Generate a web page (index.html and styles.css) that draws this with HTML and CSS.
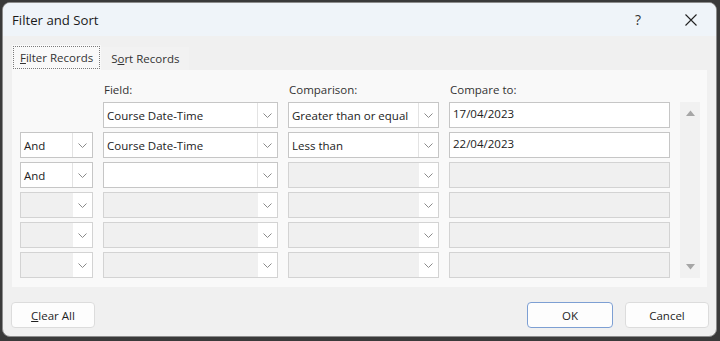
FILE: index.html
```html
<!DOCTYPE html>
<html>
<head>
<meta charset="utf-8">
<link rel="stylesheet" href="styles.css">
</head>
<body>
<div class="window">
  <div class="titlebar">
    <span class="title">Filter and Sort</span>
    <span class="help">?</span>
    <span class="close"><svg width="12" height="12" viewBox="0 0 12 12"><path d="M0.5 0.5 L11.5 11.5 M11.5 0.5 L0.5 11.5" stroke="#222" stroke-width="1.1" fill="none"/></svg></span>
  </div>
  <div class="tabs">
    <div class="tab active"><span class="focus"><u>F</u>ilter Records</span></div>
    <div class="tab">S<u>o</u>rt Records</div>
  </div>
  <div class="panel">
    <div class="grid">
      <div></div>
      <div class="label">Field:</div>
      <div class="label">Comparison:</div>
      <div class="label">Compare to:</div>
      <div></div>

      <div></div>
      <div class="combo"><span class="txt">Course Date-Time</span><span class="btn"><svg width="9" height="5" viewBox="0 0 9 5"><path d="M0.5 0.5 L4.5 4.5 L8.5 0.5" stroke="#8a8a8a" fill="none"/></svg></span></div>
      <div class="combo"><span class="txt">Greater than or equal</span><span class="btn"><svg width="9" height="5" viewBox="0 0 9 5"><path d="M0.5 0.5 L4.5 4.5 L8.5 0.5" stroke="#8a8a8a" fill="none"/></svg></span></div>
      <div class="tbox">17/04/2023</div>
      <div class="scroll">
        <svg width="9" height="6" viewBox="0 0 9 6"><path d="M0 6 L4.5 0.5 L9 6 Z" fill="#a6a6a6"/></svg>
        <svg width="9" height="6" viewBox="0 0 9 6"><path d="M0 0 L4.5 5.5 L9 0 Z" fill="#a6a6a6"/></svg>
      </div>

      <div class="combo"><span class="txt">And</span><span class="btn"><svg width="9" height="5" viewBox="0 0 9 5"><path d="M0.5 0.5 L4.5 4.5 L8.5 0.5" stroke="#8a8a8a" fill="none"/></svg></span></div>
      <div class="combo"><span class="txt">Course Date-Time</span><span class="btn"><svg width="9" height="5" viewBox="0 0 9 5"><path d="M0.5 0.5 L4.5 4.5 L8.5 0.5" stroke="#8a8a8a" fill="none"/></svg></span></div>
      <div class="combo"><span class="txt">Less than</span><span class="btn"><svg width="9" height="5" viewBox="0 0 9 5"><path d="M0.5 0.5 L4.5 4.5 L8.5 0.5" stroke="#8a8a8a" fill="none"/></svg></span></div>
      <div class="tbox">22/04/2023</div>

      <div class="combo"><span class="txt">And</span><span class="btn"><svg width="9" height="5" viewBox="0 0 9 5"><path d="M0.5 0.5 L4.5 4.5 L8.5 0.5" stroke="#8a8a8a" fill="none"/></svg></span></div>
      <div class="combo"><span class="txt"></span><span class="btn"><svg width="9" height="5" viewBox="0 0 9 5"><path d="M0.5 0.5 L4.5 4.5 L8.5 0.5" stroke="#8a8a8a" fill="none"/></svg></span></div>
      <div class="combo off"><span class="txt"></span><span class="btn"><svg width="9" height="5" viewBox="0 0 9 5"><path d="M0.5 0.5 L4.5 4.5 L8.5 0.5" stroke="#8a8a8a" fill="none"/></svg></span></div>
      <div class="tbox off"></div>

      <div class="combo off"><span class="txt"></span><span class="btn"><svg width="9" height="5" viewBox="0 0 9 5"><path d="M0.5 0.5 L4.5 4.5 L8.5 0.5" stroke="#8a8a8a" fill="none"/></svg></span></div>
      <div class="combo off"><span class="txt"></span><span class="btn"><svg width="9" height="5" viewBox="0 0 9 5"><path d="M0.5 0.5 L4.5 4.5 L8.5 0.5" stroke="#8a8a8a" fill="none"/></svg></span></div>
      <div class="combo off"><span class="txt"></span><span class="btn"><svg width="9" height="5" viewBox="0 0 9 5"><path d="M0.5 0.5 L4.5 4.5 L8.5 0.5" stroke="#8a8a8a" fill="none"/></svg></span></div>
      <div class="tbox off"></div>

      <div class="combo off"><span class="txt"></span><span class="btn"><svg width="9" height="5" viewBox="0 0 9 5"><path d="M0.5 0.5 L4.5 4.5 L8.5 0.5" stroke="#8a8a8a" fill="none"/></svg></span></div>
      <div class="combo off"><span class="txt"></span><span class="btn"><svg width="9" height="5" viewBox="0 0 9 5"><path d="M0.5 0.5 L4.5 4.5 L8.5 0.5" stroke="#8a8a8a" fill="none"/></svg></span></div>
      <div class="combo off"><span class="txt"></span><span class="btn"><svg width="9" height="5" viewBox="0 0 9 5"><path d="M0.5 0.5 L4.5 4.5 L8.5 0.5" stroke="#8a8a8a" fill="none"/></svg></span></div>
      <div class="tbox off"></div>

      <div class="combo off"><span class="txt"></span><span class="btn"><svg width="9" height="5" viewBox="0 0 9 5"><path d="M0.5 0.5 L4.5 4.5 L8.5 0.5" stroke="#8a8a8a" fill="none"/></svg></span></div>
      <div class="combo off"><span class="txt"></span><span class="btn"><svg width="9" height="5" viewBox="0 0 9 5"><path d="M0.5 0.5 L4.5 4.5 L8.5 0.5" stroke="#8a8a8a" fill="none"/></svg></span></div>
      <div class="combo off"><span class="txt"></span><span class="btn"><svg width="9" height="5" viewBox="0 0 9 5"><path d="M0.5 0.5 L4.5 4.5 L8.5 0.5" stroke="#8a8a8a" fill="none"/></svg></span></div>
      <div class="tbox off"></div>
    </div>
  </div>
  <div class="footer">
    <button class="button"><u>C</u>lear All</button>
    <span class="spacer"></span>
    <button class="button default">OK</button>
    <button class="button">Cancel</button>
  </div>
</div>
</body>
</html>
```

FILE: styles.css
```css
* { box-sizing: border-box; }
html, body { margin: 0; padding: 0; }
body {
  background: #3a3a3a;
  width: 720px;
  height: 341px;
  overflow: hidden;
  font-family: "Open Sans", "Noto Sans", sans-serif;
  font-size: 11.5px;
  color: #1f1f1f;
}
.window {
  margin: 2px 0 0 2px;
  width: 715px;
  height: 335px;
  border: 1px solid #8c8c8c;
  border-radius: 8px;
  overflow: hidden;
  background: #f0f0f0;
  display: flex;
  flex-direction: column;
}
.titlebar {
  height: 33px;
  flex: none;
  background: #eff4f9;
  display: flex;
  align-items: center;
  padding-left: 9px;
}
.title {
  font-size: 13.2px;
  color: #1a1a1a;
  flex: 1;
}
.help {
  font-size: 14px;
  color: #333;
  width: 14px;
  margin-right: 36px;
}
.close {
  width: 12px;
  height: 12px;
  margin-right: 19px;
  display: flex;
}
.tabs {
  height: 34px;
  flex: none;
  display: flex;
  align-items: flex-end;
  padding-left: 9px;
}
.tab {
  height: 23px;
  padding: 0 10px;
  display: flex;
  align-items: center;
  color: #333;
  font-size: 11.5px;
  background: #f2f2f2;
}
.tab.active {
  height: 25px;
  padding: 1px;
  background: #f9f9f9;
}
.focus {
  border: 1px dotted #7a7a7a;
  height: 100%;
  display: flex;
  align-items: center;
  padding: 0 6px;
}
.panel {
  margin: 0 9px;
  height: 217px;
  flex: none;
  background: #f9f9f9;
}
.grid {
  display: grid;
  grid-template-columns: 73px 175px 151px 221px 20px;
  grid-template-rows: 16px repeat(6, 26px);
  column-gap: 10px;
  row-gap: 4px;
  padding: 12px 0 0 8px;
}
.label {
  font-size: 11.5px;
  color: #333;
  line-height: 16px;
  padding-left: 1px;
}
.combo {
  display: flex;
  border: 1px solid #c6c6c6;
  background: #fff;
}
.combo .txt {
  flex: 1;
  padding-left: 3px;
  display: flex;
  align-items: center;
  color: #222;
}
.combo .btn {
  width: 20px;
  flex: none;
  display: flex;
  align-items: center;
  justify-content: center;
  background: #fff;
  border-left: 1px solid #e3e3e3;
}
.combo.off, .tbox.off {
  background: #f0f0f0;
  border-color: #d3d3d3;
}
.combo.off .btn { border-left-color: #f0f0f0; }
.tbox {
  border: 1px solid #c6c6c6;
  background: #fff;
  padding: 3px 0 0 3px;
  color: #222;
  line-height: 16px;
}
.scroll {
  grid-column: 5;
  grid-row: 2 / 8;
  background: #f1f1f1;
  display: flex;
  flex-direction: column;
  justify-content: space-between;
  align-items: center;
  padding: 8px 0 8px;
}
.footer {
  flex: 1;
  display: flex;
  align-items: flex-start;
  padding: 15px 7px 0 8px;
  gap: 12px;
}
.spacer { flex: 1; }
.button {
  width: 84px;
  height: 26px;
  border: 1px solid #dcdcdc;
  border-radius: 4px;
  background: #fdfdfd;
  font-family: "Open Sans", "Noto Sans", sans-serif;
  font-size: 11.5px;
  color: #1f1f1f;
  padding: 0;
}
.button.default {
  border-color: #7d9fd3;
  width: 86px;
}
```
